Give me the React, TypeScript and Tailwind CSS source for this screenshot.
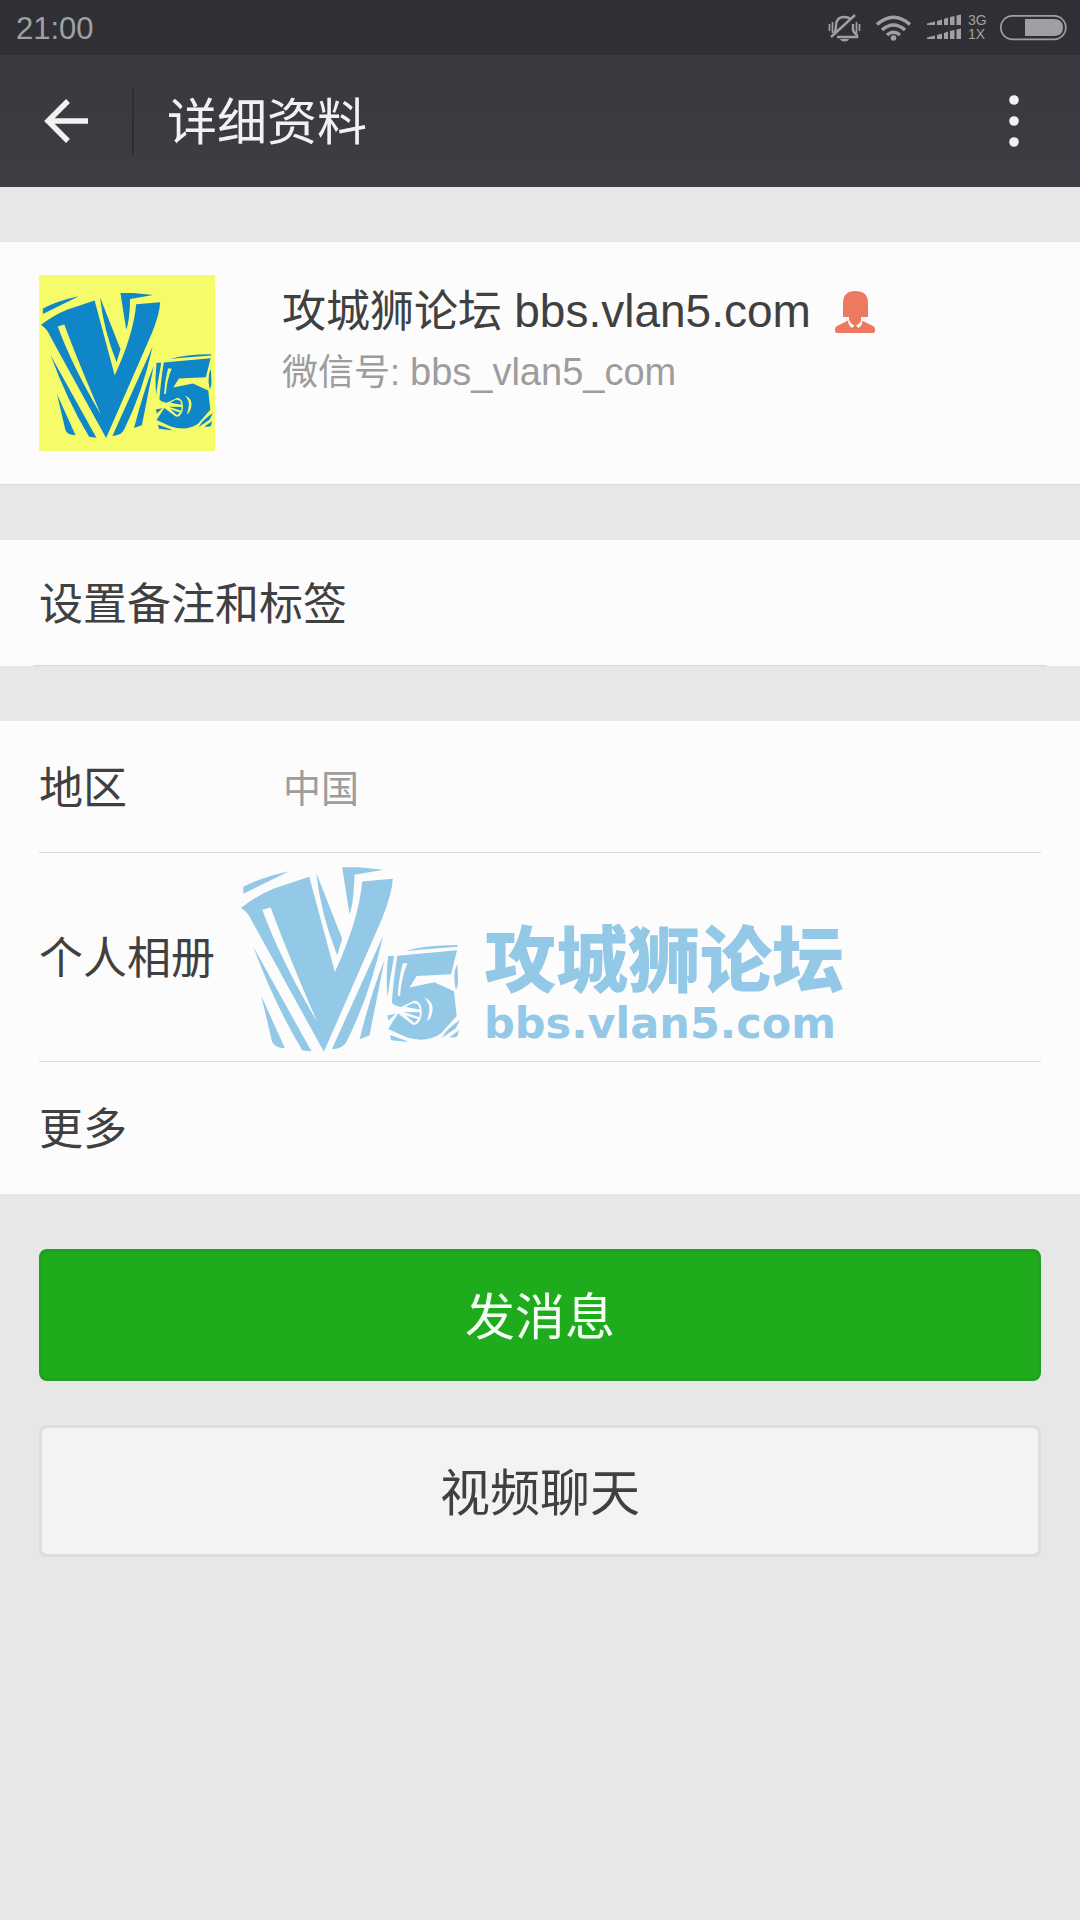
import React from "react";

function V5Logo({ className }: { className: string }) {
  return (
    <svg viewBox="31 51 658 555" className={className} fill="currentColor" aria-hidden="true">
      <path d="M38 110Q95 80 176 63L38 131Z" />
      <path
        fillRule="evenodd"
        d="M31 173Q80 135 130 115L236 80L313 366Q385 210 395 94L487 86Q485 130 455 205L280 606L65 215Q55 190 31 173ZM95 179Q150 330 260 516Q175 320 120 172Z"
      />
      <path d="M257 68L335 266L320 316Q270 190 257 68Z" />
      <path d="M335 51H385L460 59L372 74Q370 160 357 192Z" />
      <path d="M68 290L243 605L215 601Q130 460 68 290Z" />
      <path d="M92 438L163 595Q130 594 124 574Z" />
      <path d="M458 257Q420 430 350 572Q340 597 304 598Z" />
      <path d="M462 330L417 557L387 568Q425 420 462 330Z" />
      <path d="M526 304Q580 285 682 285V290L560 300Z" />
      <path d="M473 318H491Q480 380 471 441Q466 380 473 318Z" />
      <path
        fillRule="evenodd"
        d="M501 317L680 301L662 373L559 378L537 413L612 397L671 424L679 498L632 551Q590 580 530 563L473 537L503 491L545 523Q556 528 564 518Q575 505 574 484Q574 457 553 452L512 471Q490 468 484 458Q490 380 501 317ZM517 340Q505 385 502 438L509 437Q512 385 531 340ZM581 443Q612 455 606 485Q602 508 589 515Q601 480 595 463Q589 450 581 443Z"
      />
      <path d="M525 471L548 459L563 463L569 479ZM520 486L568 487V502ZM526 496L563 508L552 519Z" />
      <path d="M471 496L487 494L497 491L474 512Z" />
      <path d="M479 555L530 573V576L482 571Z" />
      <path d="M681 342Q683 380 683 402L677 420Q669 390 674 360Z" />
      <path d="M689 510L676 536L634 564Q650 535 689 510ZM686 541L681 560Q670 565 657 562Z" />
    </svg>
  );
}

function StatusIcons() {
  return (
    <svg viewBox="0 0 240 30" className="h-[30px] w-60 text-[#a0a0a2]" fill="none" stroke="currentColor" aria-hidden="true">
      <g strokeWidth="2.400">
        <path d="M7 21Q9 18 9 13Q9 4 17 4Q21 4 24 6M26 11V17Q27 20 30 22V24H10M4 24L28 2" />
        <path d="M2.5 11V18M5.5 9V20M29.5 9V20M32.500 11V18" strokeWidth="1.700" />
        <path d="M13 26H22Q21 28.500 17.500 28.500Q14 28.500 13 26Z" fill="currentColor" stroke="none" />
      </g>
      <g strokeWidth="3.600">
        <path d="M50 11.500Q66.500-3 83 11.500M55 17Q66.500 7 78 17M60 22Q66.500 16.500 73 22" />
        <circle cx="66.500" cy="25" r="2.800" fill="currentColor" stroke="none" />
      </g>
      <g fill="currentColor" stroke="none">
        <path d="M100 10.500L108 8.500V12H100ZM110 8L115 6.500V12H110ZM117 6L121 4.500V12H117ZM123 4L127.500 3V12H123ZM129.500 2.500L134 1.500V12H129.500Z" />
        <path d="M100 24.500L108 22.500V26H100ZM110 22L115 20.500V26H110ZM117 20L121 18.500V26H117ZM123 18L127.500 17V26H123ZM129.500 16.500L134 15.500V26H129.500Z" />
        <text x="141" y="12" fontSize="14" fontFamily="Liberation Sans">3G</text>
        <text x="141" y="26" fontSize="14" fontFamily="Liberation Sans">1X</text>
      </g>
      <rect x="173.800" y="2.800" width="65" height="23.500" rx="11.700" strokeWidth="1.700" />
      <path d="M198 6H227Q236 6 236 14.500Q236 23 227 23H198Z" fill="currentColor" stroke="none" />
    </svg>
  );
}

function FemaleIcon() {
  return (
    <svg viewBox="0 0 40 42" className="h-[42px] w-10 text-[#ed7a60]" role="img" aria-label="女">
      <path
        fill="currentColor"
        d="M8 26V12Q8 0 20.500 0Q33 0 33 12V26H26V29L38 35Q40 36 40 38V40Q40 42 38 42H2Q0 42 0 40V38Q0 36 2 35L14 29V26Z"
      />
      <path fill="#fcfcfc" d="M14 28.500Q15.500 33 19.500 34.500L17 37Q13 34 13.200 30ZM26.500 28.500Q25 33 21 34.500L23.500 37Q27.500 34 27.300 30Z" />
    </svg>
  );
}

export default function App() {
  return (
    <div className="min-h-screen bg-[#e7e7e7] font-['Liberation_Sans','Noto_Sans_CJK_SC',sans-serif] text-[44px] leading-[56px] text-[#404040]">
      <div className="flex h-[55px] items-center justify-between bg-[#2f3035] pr-[13px] pl-4 text-[#a0a0a2]">
        <time className="pt-0.5 text-[31px] leading-10">21:00</time>
        <StatusIcons />
      </div>

      <header className="flex h-[132px] items-center bg-linear-to-b from-[#38393e] to-[#3d3e43] text-[#f2f2f2]">
        <button aria-label="返回" className="flex w-[132px] justify-center">
          <svg viewBox="0 0 44 44" className="size-11" fill="none" stroke="currentColor" strokeWidth="5.500" aria-hidden="true">
            <path d="M24 2L4 22L24 42M4 22H44" />
          </svg>
        </button>
        <div className="h-[66px] w-0.5 bg-[#2d2e32]" />
        <h1 className="flex-1 pt-1 pl-[33px] text-[50px] font-normal">详细资料</h1>
        <button aria-label="更多选项" className="flex w-[132px] justify-center">
          <svg viewBox="0 0 10 52" className="h-[52px] w-2.5" fill="currentColor" aria-hidden="true">
            <circle cx="5" cy="5" r="4.800" />
            <circle cx="5" cy="26" r="4.800" />
            <circle cx="5" cy="47" r="4.800" />
          </svg>
        </button>
      </header>

      <main>
        <section className="mt-[55px] flex border-b border-[#d9d9d9] bg-[#fcfcfc] px-[39px] py-[33px]">
          <div className="flex size-44 items-start justify-center bg-[#f6fb6a] pt-[18px]">
            <V5Logo className="h-[145px] w-[172px] text-[#0e86c8]" />
          </div>
          <div className="ml-[67px] pt-2">
            <div className="flex items-center">
              <h2 className="font-normal">
                攻城狮论坛 <span className="text-[46px]">bbs.vlan5.com</span>
              </h2>
              <span className="ml-6">
                <FemaleIcon />
              </span>
            </div>
            <p className="mt-1 text-[36px] text-[#9d9d9d]">
              微信号: <span className="text-[38px]">bbs_vlan5_com</span>
            </p>
          </div>
        </section>

        <section className="mt-[55px] bg-[#fcfcfc] px-[33px]">
          <button className="flex h-[126px] w-full items-center border-b border-[#d9d9d9] pt-1 pl-1.5 text-left">
            设置备注和标签
          </button>
        </section>

        <section className="mt-[55px] bg-[#fcfcfc] px-[39px]">
          <div className="flex h-[132px] items-center border-b border-[#d9d9d9] pt-1">
            <span className="w-[244px]">地区</span>
            <span className="text-[38px] text-[#9d9d9d]">中国</span>
          </div>
          <button className="flex h-[209px] w-full items-center border-b border-[#d9d9d9] pt-1 text-left">
            <span>个人相册</span>
            <span className="ml-[26px] flex items-center text-[#93c9e7]">
              <V5Logo className="h-[185px] w-[219px]" />
              <span className="ml-6 flex flex-col pt-14 font-bold">
                <span className="text-[72px] leading-[72px] font-black">攻城狮论坛</span>
                <span className="font-['DejaVu_Sans',sans-serif] text-[43px] leading-[52px]">bbs.vlan5.com</span>
              </span>
            </span>
          </button>
          <button className="flex h-[132px] w-full items-center pt-1 text-left">更多</button>
        </section>

        <div className="mt-[55px] flex flex-col gap-11 px-[39px] text-[50px]">
          <button className="h-[132px] rounded-lg border-3 border-[#1fa01f] bg-[#1fac1c] pt-1.5 text-[#f5fff5]">发消息</button>
          <button className="h-[132px] rounded-lg border-3 border-[#dddddd] bg-[#f3f3f3] pt-1.5">视频聊天</button>
        </div>
      </main>
    </div>
  );
}
